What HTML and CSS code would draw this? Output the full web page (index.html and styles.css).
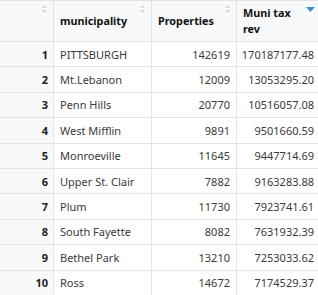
FILE: index.html
```html
<!DOCTYPE html>
<html>
<head>
<meta charset="utf-8">
<link rel="stylesheet" href="styles.css">
</head>
<body>
<div class="grid">
  <div class="hd rn"><span class="sort"><svg width="7" height="10" viewBox="0 0 7 10"><path d="M0.8 4 L3.5 1 L6.2 4 Z M0.8 6 L3.5 9 L6.2 6 Z" fill="#d6d9dc"/></svg></span></div>
  <div class="hd"><span class="lbl">municipality</span><span class="sort"><svg width="7" height="10" viewBox="0 0 7 10"><path d="M0.8 4 L3.5 1 L6.2 4 Z M0.8 6 L3.5 9 L6.2 6 Z" fill="#d6d9dc"/></svg></span></div>
  <div class="hd"><span class="lbl">Properties</span><span class="sort"><svg width="7" height="10" viewBox="0 0 7 10"><path d="M0.8 4 L3.5 1 L6.2 4 Z M0.8 6 L3.5 9 L6.2 6 Z" fill="#d6d9dc"/></svg></span></div>
  <div class="hd last"><span class="lbl">Muni tax<br>rev</span><span class="sort active"><svg width="9" height="6" viewBox="0 0 9 6"><path d="M0 0 L9 0 L4.5 5 Z" fill="#3b8fd8"/></svg></span></div>

  <div class="rn c">1</div><div class="c">PITTSBURGH</div><div class="c num">142619</div><div class="c num last">170187177.48</div>
  <div class="rn c">2</div><div class="c">Mt.Lebanon</div><div class="c num">12009</div><div class="c num last">13053295.20</div>
  <div class="rn c">3</div><div class="c">Penn Hills</div><div class="c num">20770</div><div class="c num last">10516057.08</div>
  <div class="rn c">4</div><div class="c">West Mifflin</div><div class="c num">9891</div><div class="c num last">9501660.59</div>
  <div class="rn c">5</div><div class="c">Monroeville</div><div class="c num">11645</div><div class="c num last">9447714.69</div>
  <div class="rn c">6</div><div class="c">Upper St. Clair</div><div class="c num">7882</div><div class="c num last">9163283.88</div>
  <div class="rn c">7</div><div class="c">Plum</div><div class="c num">11730</div><div class="c num last">7923741.61</div>
  <div class="rn c">8</div><div class="c">South Fayette</div><div class="c num">8082</div><div class="c num last">7631932.39</div>
  <div class="rn c">9</div><div class="c">Bethel Park</div><div class="c num">13210</div><div class="c num last">7253033.62</div>
  <div class="rn c">10</div><div class="c">Ross</div><div class="c num">14672</div><div class="c num last">7174529.37</div>
</div>
</body>
</html>
```
FILE: styles.css
```css
html, body {
  margin: 0;
  padding: 0;
  background: #ffffff;
}
body {
  font-family: "Noto Sans", "Open Sans", sans-serif;
  font-size: 11px;
  color: #3a3a3a;
  overflow: hidden;
}
.grid {
  display: grid;
  grid-template-columns: 54px 98px 85px 81px;
  grid-template-rows: 41px repeat(10, 25.4px);
  border-top: 1px solid #e2e5e8;
}
.grid > div {
  border-right: 1px solid #e2e5e8;
  border-bottom: 1px solid #e2e5e8;
  box-sizing: border-box;
  position: relative;
}
.grid > div.last {
  border-right: none;
}
.hd {
  background: #f8f9fa;
  display: flex;
  align-items: center;
  padding-left: 6px;
  font-weight: bold;
  color: #111;
  font-size: 10.8px;
  line-height: 16px;
}
.hd .lbl {
  white-space: nowrap;
}
.sort {
  position: absolute;
  top: 3px;
  right: 5px;
  line-height: 0;
}
.sort.active {
  top: 6px;
  right: 3px;
}
.rn {
  background: #f8f9fa;
}
.c {
  display: flex;
  align-items: center;
  padding: 0 6px;
  white-space: nowrap;
}
.rn.c {
  justify-content: flex-end;
  padding-right: 5px;
  font-weight: bold;
  color: #222;
}
.num {
  justify-content: flex-end;
}
.num.last {
  padding-right: 4px;
}
```
